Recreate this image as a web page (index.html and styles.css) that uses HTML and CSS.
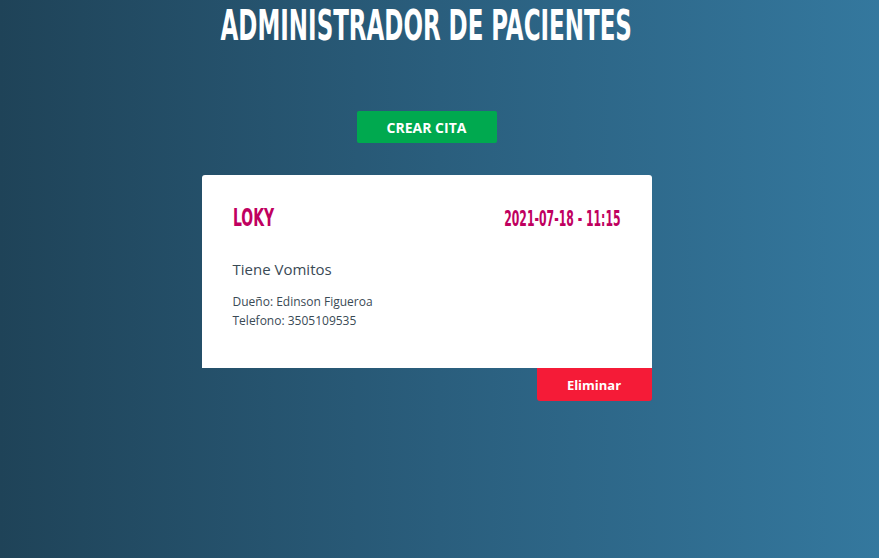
FILE: index.html
```html
<!DOCTYPE html>
<html lang="es">
<head>
<meta charset="utf-8">
<title>Administrador de Pacientes</title>
<link rel="stylesheet" href="styles.css">
</head>
<body>
  <main class="app">
    <h1 class="title"><span class="title-text">ADMINISTRADOR DE PACIENTES</span></h1>
    <button class="btn-create" type="button">CREAR CITA</button>
    <section class="appointment">
      <div class="card">
        <div class="card-head">
          <h2 class="pet"><span class="pet-text">LOKY</span></h2>
          <span class="date"><span class="date-text">2021-07-18 - 11:15</span></span>
        </div>
        <p class="symptoms">Tiene Vomitos</p>
        <p class="info">Dueño: Edinson Figueroa</p>
        <p class="info">Telefono: 3505109535</p>
      </div>
      <button class="btn-delete" type="button">Eliminar</button>
    </section>
  </main>
</body>
</html>
```
FILE: styles.css
```css
* { box-sizing: border-box; }
html, body { height: 100%; }
body {
  margin: 0;
  background: linear-gradient(90deg, #1f4358 0%, #2a5e7d 50%, #34789e 100%);
  font-family: "Open Sans", "Noto Sans", sans-serif;
  color: #333;
}
.app {
  display: flex;
  flex-direction: column;
  align-items: center;
  padding-right: 26px;
}
.title {
  margin: 5px 0 0;
  height: 41px;
  line-height: 41px;
  font-family: "DejaVu Sans Condensed", sans-serif;
  font-weight: 700;
  font-size: 42px;
  color: #fff;
  white-space: nowrap;
  display: flex;
  justify-content: center;
  width: 409px;
}
.title-text {
  display: inline-block;
  transform: scaleX(0.608);
}
.btn-create {
  margin-top: 65px;
  width: 140px;
  height: 32px;
  border: none;
  border-radius: 2px;
  background: #00a94f;
  color: #fff;
  font-family: "Open Sans", sans-serif;
  font-weight: 700;
  font-size: 14px;
  cursor: pointer;
}
.appointment {
  margin-top: 32px;
  width: 450px;
  display: flex;
  flex-direction: column;
  align-items: flex-end;
}
.card {
  width: 100%;
  height: 193px;
  background: #fff;
  border-radius: 3px 3px 0 0;
  padding: 28px 31px 0;
}
.card-head {
  display: flex;
  justify-content: space-between;
  align-items: baseline;
}
.pet, .date {
  font-family: "DejaVu Sans Condensed", sans-serif;
  font-weight: 700;
  color: #c0005f;
  white-space: nowrap;
}
.pet { margin: 0; font-size: 25px; }
.pet-text {
  display: inline-block;
  transform: scaleX(0.62);
  transform-origin: left center;
}
.date { font-size: 22px; }
.date-text {
  display: inline-block;
  transform: scaleX(0.55);
  transform-origin: right center;
}
.symptoms {
  margin: 27px 0 13px;
  font-size: 15px;
  color: #3a4a55;
}
.info {
  margin: 0;
  font-size: 12px;
  line-height: 19px;
  color: #3a4a55;
}
.btn-delete {
  width: 115px;
  height: 33px;
  border: none;
  border-radius: 0 0 3px 3px;
  background: #f51b37;
  color: #fff;
  font-family: "Open Sans", sans-serif;
  font-weight: 700;
  font-size: 13px;
  cursor: pointer;
}
```
